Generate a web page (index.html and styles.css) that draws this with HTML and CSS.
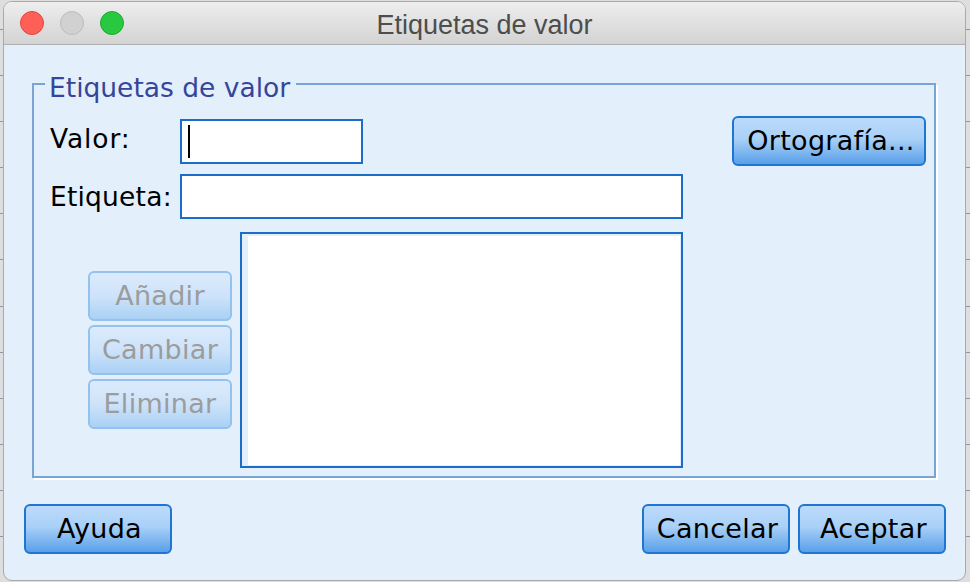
FILE: index.html
```html
<!DOCTYPE html>
<html lang="es">
<head>
<meta charset="utf-8">
<title>Etiquetas de valor</title>
<link rel="stylesheet" href="styles.css">
</head>
<body>
<div class="window">
  <div class="titlebar">
    <div class="lights">
      <span class="light red"></span>
      <span class="light gray"></span>
      <span class="light green"></span>
    </div>
    <div class="title">Etiquetas de valor</div>
    <div></div>
  </div>
  <div class="content">
    <fieldset class="group">
      <legend>Etiquetas de valor</legend>
      <div class="row row-valor">
        <span class="lbl lbl-valor">Valor:</span>
        <div class="field field-valor"><span class="caret"></span></div>
        <button class="btn btn-spell">Ortografía...</button>
      </div>
      <div class="row row-etiqueta">
        <span class="lbl">Etiqueta:</span>
        <div class="field field-etiqueta"></div>
      </div>
      <div class="row row-list">
        <div class="side-buttons">
          <button class="btn btn-side" disabled>Añadir</button>
          <button class="btn btn-side" disabled>Cambiar</button>
          <button class="btn btn-side" disabled>Eliminar</button>
        </div>
        <div class="listbox"><div class="list-inner"></div></div>
      </div>
    </fieldset>
    <div class="footer">
      <button class="btn btn-foot">Ayuda</button>
      <div class="footer-right">
        <button class="btn btn-foot">Cancelar</button>
        <button class="btn btn-foot">Aceptar</button>
      </div>
    </div>
  </div>
</div>
</body>
</html>
```

FILE: styles.css
```css
* { box-sizing: border-box; }
html, body { margin: 0; padding: 0; }
body {
  width: 970px;
  height: 582px;
  overflow: hidden;
  background-color: #dedede;
  background-image: repeating-linear-gradient(to bottom, transparent 0, transparent 29px, #8a97a4 29px, #8a97a4 30px, transparent 30px, transparent 46.1px);
  font-family: "DejaVu Sans", "Liberation Sans", sans-serif;
}
.window {
  margin: 1px 0 0 3px;
  width: 963px;
  height: 580px;
  border: 1px solid #a9a9a9;
  border-radius: 9px;
  overflow: hidden;
  background: #e3effa;
  display: flex;
  flex-direction: column;
}
.titlebar {
  height: 43px;
  flex: none;
  border-bottom: 1px solid #b1b1b1;
  background: linear-gradient(#eeeeee, #d3d3d3);
  display: grid;
  grid-template-columns: 1fr auto 1fr;
  align-items: center;
}
.lights { display: flex; gap: 16px; padding-left: 16px; }
.light { width: 24px; height: 24px; border-radius: 50%; }
.red { background: #fe5f57; border: 1px solid #e2463f; }
.gray { background: #d1d1d1; border: 1px solid #bcbcbc; }
.green { background: #28c840; border: 1px solid #1fa934; }
.title {
  font-family: "Liberation Sans", Arial, sans-serif;
  font-size: 27px;
  line-height: 30px;
  color: #4d4d4d;
  padding-top: 3px;
}
.content { flex: 1; display: flex; flex-direction: column; }
.group {
  margin: 20px 29px 0 28px;
  padding: 0 0 8px 0;
  min-width: 0;
  border: 2px solid #78a5d6;
  box-shadow: 2px 2px 0 #ffffff;
}
.group legend {
  margin-left: 11px;
  padding: 8px 6px 0 4px;
  font-size: 26.5px;
  line-height: 30px;
  color: #34459b;
}
.row { display: flex; align-items: center; }
.row-valor { margin-top: 13px; padding-left: 16px; padding-right: 8px; }
.row-etiqueta { margin-top: 8px; padding-left: 16px; }
.row-list { margin-top: 13px; padding-left: 54px; gap: 8px; }
.lbl { width: 130px; font-size: 26.5px; line-height: 30px; color: #000; letter-spacing: 0.2px; }
.lbl-valor { margin-top: -4px; letter-spacing: 0.9px; }
.field {
  height: 45px;
  background: #ffffff;
  border: 2px solid #1b6ec8;
  display: flex;
  align-items: center;
  padding-left: 6px;
}
.field-valor { width: 183px; }
.field-etiqueta { width: 503px; }
.caret { width: 2px; height: 33px; background: #000; }
.btn {
  font-family: "DejaVu Sans", "Liberation Sans", sans-serif;
  font-size: 27px;
  line-height: 30px;
  letter-spacing: 0.3px;
  color: #000;
  height: 50px;
  padding: 0;
  border: 2px solid #1f76d1;
  border-radius: 6px;
  background: linear-gradient(#bcdbfb 0%, #a9d0f7 45%, #8cbff2 65%, #59a0e9 100%);
}
.btn-spell { margin-left: auto; width: 194px; letter-spacing: 0.3px; padding-left: 4px; }
.side-buttons { display: flex; flex-direction: column; gap: 4px; }
.btn-side {
  width: 144px;
  color: #9c9c9c;
  border-color: #93c2ef;
  background: linear-gradient(#dcebfc 0%, #cde3fa 50%, #aad1f5 100%);
}
.listbox {
  width: 443px;
  height: 236px;
  border: 2px solid #1b6ec8;
  background: #e3effa;
  padding: 2px 1px 1px 6px;
}
.list-inner { width: 100%; height: 100%; background: #ffffff; }
.footer {
  margin: 26px 19px 0 20px;
  display: flex;
  justify-content: space-between;
}
.footer-right { display: flex; gap: 8px; }
.btn-foot { width: 148px; padding-left: 3px; }
```
